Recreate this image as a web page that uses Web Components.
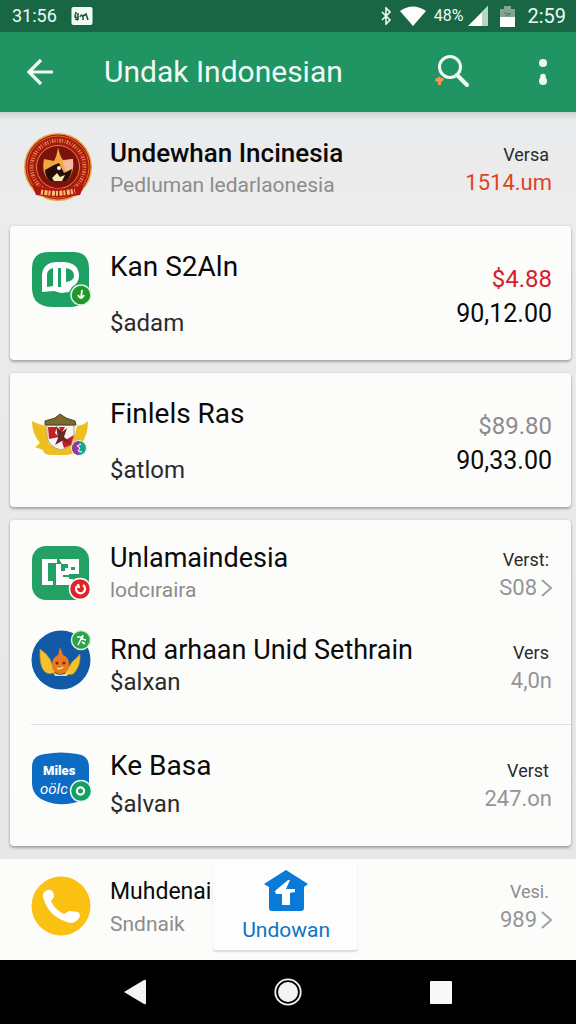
<!DOCTYPE html>
<html lang="id">
<head>
<meta charset="utf-8">
<meta name="viewport" content="width=device-width, initial-scale=1">
<title>Undak Indonesian</title>
<style>
  body { margin: 0; font-family: Roboto, "Liberation Sans", sans-serif; color: #0a0a0a; background: #e9eaeb; }
</style>
</head>
<body>
<phone-screen>
  <status-bar slot="top"></status-bar>
  <app-bar slot="top">Undak Indonesian</app-bar>

  <list-row class="head" variant="hero">
    <app-icon slot="icon" name="seal"></app-icon>
    <span slot="title">Undewhan Incinesia</span>
    <span slot="sub">Pedluman ledarlaonesia</span>
    <span slot="meta">Versa</span>
    <span slot="value">1514.um</span>
  </list-row>

  <list-card>
    <list-row variant="price">
      <app-icon slot="icon" name="chat"></app-icon>
      <span slot="title">Kan S2Aln</span>
      <span slot="sub">$adam</span>
      <span slot="meta">$4.88</span>
      <span slot="value">90,12.00</span>
    </list-row>
  </list-card>

  <list-card>
    <list-row variant="price" muted>
      <app-icon slot="icon" name="crest"></app-icon>
      <span slot="title">Finlels Ras</span>
      <span slot="sub">$atlom</span>
      <span slot="meta">$89.80</span>
      <span slot="value">90,33.00</span>
    </list-row>
  </list-card>

  <list-card>
    <list-row variant="first" chevron>
      <app-icon slot="icon" name="maze"></app-icon>
      <span slot="title">Unlamaindesia</span>
      <span slot="sub">lodcıraira</span>
      <span slot="meta">Verst:</span>
      <span slot="value">S08</span>
    </list-row>
    <list-row variant="second">
      <app-icon slot="icon" name="garuda"></app-icon>
      <span slot="title">Rnd arhaan Unid Sethrain</span>
      <span slot="sub">$alxan</span>
      <span slot="meta">Vers</span>
      <span slot="value">4,0n</span>
    </list-row>
    <list-row variant="third">
      <app-icon slot="icon" name="badge"></app-icon>
      <span slot="title">Ke Basa</span>
      <span slot="sub">$alvan</span>
      <span slot="meta">Verst</span>
      <span slot="value">247.on</span>
    </list-row>
  </list-card>

  <list-row class="tail" variant="tail" chevron>
    <app-icon slot="icon" name="phone"></app-icon>
    <span slot="title">Muhdenai</span>
    <span slot="sub">Sndnaik</span>
    <span slot="meta">Vesi.</span>
    <span slot="value">989</span>
  </list-row>

  <home-button slot="float">Undowan</home-button>
  <nav-bar slot="bottom"></nav-bar>
</phone-screen>

<script>
const define = (name, html) => {
  const t = document.createElement('template');
  t.innerHTML = html;
  customElements.define(name, class extends HTMLElement {
    constructor() {
      super();
      this.attachShadow({ mode: 'open' }).append(t.content.cloneNode(true));
    }
  });
};

define('phone-screen', `
<style>
  :host { display: flex; flex-direction: column; min-height: 100vh; }
  main { flex: 1; display: flex; flex-direction: column; position: relative;
    background: linear-gradient(#cfd4d3 0, #eaebec 8px, #ececed 100px, #e6e6e6 100%); }
  ::slotted(list-card) { margin: 0 5px 13px 10px; }
  ::slotted(.tail) { flex: 1; background: #fcfcfb; }
</style>
<slot name="top"></slot>
<main><slot></slot><slot name="float"></slot></main>
<slot name="bottom"></slot>`);

define('status-bar', `
<style>
  :host { display: flex; align-items: center; height: 32px; padding: 0 10px 0 12px; background: #196644; color: #effaf4; font-size: 18px; line-height: 24px; }
  svg { display: block; flex: none; }
  .note { margin-left: 14px; }
  .right { margin-left: auto; display: flex; align-items: center; gap: 8px; }
  .pct { font-size: 16px; margin-right: -3px; }
  .battery { margin-left: 4px; }
  .clock { margin-left: 4px; font-size: 20px; }
</style>
<span>31:56</span>
<svg class="note" width="22" height="18" viewBox="0 0 22 18"><rect x="0.500" width="21" height="18" rx="2" fill="#f4fbf7"/><path d="M5 5l-1 5 3 1M7 6v7M9 10q2-4 3 0v3M12 9l3-2 2 6M4 12l3 1" fill="none" stroke="#1b5a3f" stroke-width="1.600"/></svg>
<div class="right">
  <svg width="12" height="18" viewBox="0 0 12 18"><path d="M2 5l8 8-4 4V1l4 4-8 8" fill="none" stroke="#effaf4" stroke-width="1.600"/></svg>
  <svg width="26" height="20" viewBox="0 0 26 20"><path d="M0 5Q13-4 26 5L13 20Z" fill="#fff"/></svg>
  <span class="pct">48%</span>
  <svg width="20" height="20" viewBox="0 0 20 20"><path d="M20 0V20H0Z" fill="#fff"/><path d="M14 6L20 0V20H14Z" fill="#b9d3c6"/></svg>
  <svg class="battery" width="15" height="21" viewBox="0 0 15 21"><path d="M4 0h7v3h4v9H0V3h4Z" fill="#7fa692"/><path d="M4 7l7 1-6 2" stroke="#4b7d64" fill="none"/><path d="M0 11h15v10H0Z" fill="#fff"/></svg>
  <span class="clock">2:59</span>
</div>`);

define('app-bar', `
<style>
  :host { display: flex; align-items: center; height: 80px; padding: 0 13px 0 20px; background: #219464; color: #f1fbf6; }
  h1 { margin: 0 auto 0 44px; font-size: 30px; font-weight: 400; line-height: 40px; }
  button { border: 0; padding: 0; background: none; color: inherit; width: 40px; height: 48px; display: grid; place-items: center; }
  .more { margin-left: 50px; }
  svg { display: block; overflow: visible; }
</style>
<button aria-label="Back"><svg width="28" height="28" viewBox="0 0 28 28"><path d="M15 2L3 14L15 26M3 14H27" fill="none" stroke="currentColor" stroke-width="3.200"/></svg></button>
<h1><slot></slot></h1>
<button aria-label="Search"><svg width="36" height="36" viewBox="0 0 36 36"><circle cx="15" cy="13" r="10.500" fill="none" stroke="currentColor" stroke-width="3"/><path d="M22 21L32 31" stroke="currentColor" stroke-width="4" stroke-linecap="round"/><path d="M1 24L3 24L4 22L6 24L9 24L8 27L6 28L6 31L3 31L3 28L0 27Z" fill="#e79a51"/></svg></button>
<button class="more" aria-label="More"><svg width="10" height="28" viewBox="0 0 10 28"><g fill="currentColor"><circle cx="5" cy="5" r="4"/><circle cx="5" cy="18.500" r="2.800"/><circle cx="5" cy="23" r="4"/></g></svg></button>`);

define('list-card', `
<style>
  :host { display: block; background: #fcfcfb; border-radius: 4px; box-shadow: 0 2px 3px rgba(0,0,0,.28), 0 0 3px rgba(0,0,0,.1); }
</style><slot></slot>`);

define('list-row', `
<style>
  :host { --h: 114px; --gap: 0px; --indent: 21px; --end: 19px;
    display: flex; align-items: center; box-sizing: border-box; min-height: var(--h); padding: 0 var(--end) 0 var(--indent); }
  :host([variant=hero]) { --indent: 24px; --end: 24px; padding-bottom: 4px; }
  :host([variant=price]) { --h: 134px; --gap: 24px; }
  :host([variant=first]) { --h: 104px; }
  :host([variant=second]) { --h: 100px; padding-bottom: 20px; }
  :host([variant=third]) { --h: 122px; --gap: 6px; position: relative; padding-bottom: 4px; }
  :host([variant=tail]) { --h: 101px; --indent: 31px; --end: 24px; padding-bottom: 8px; }
  .icon { width: 60px; flex: none; margin-right: 19px; }
  :host([variant=hero]) .icon { width: 68px; margin-right: 18px; }
  :host([variant=price]) .icon { padding-bottom: 26px; }
  :host([muted]) .icon { padding-bottom: 12px; }
  :host([variant=first]) .icon { padding-top: 4px; }
  :host([variant=second]) .icon, :host([variant=third]) .icon { padding-bottom: 8px; }
  .text { flex: 1; display: flex; flex-direction: column; gap: var(--gap); min-width: 0; white-space: nowrap; }
  .title { font-size: 28px; line-height: 36px; }
  .sub { font-size: 24px; line-height: 28px; color: #2b2b2b; }
  :host([variant=hero]) .title { font-weight: 500; font-size: 26px; }
  :host([variant=first]) .title, :host([variant=second]) .title { font-size: 27px; }
  :host([variant=hero]) .sub, :host([variant=first]) .sub, :host([variant=tail]) .sub { color: #8c8c8e; font-size: 21px; }
  :host([variant=tail]) .title { font-size: 23px; }
  .side { display: flex; flex-direction: column; align-items: flex-end; white-space: nowrap; line-height: 28px; padding-top: 4px; }
  .meta { font-size: 18px; color: #2b2b2b; margin-right: 3px; }
  .value { font-size: 22px; color: #959597; display: flex; align-items: center; gap: 3px; }
  :host([variant=hero]) .value { color: #e0431f; }
  :host([variant=price]) .side { gap: 7px; padding-top: 6px; }
  :host([variant=price]) .meta { font-size: 24px; color: #d2202c; margin: 0; }
  :host([variant=price]) .value { font-size: 25px; color: #0a0a0a; }
  :host([variant=price][muted]) .meta { color: #8c8c8e; }
  :host([variant=second]) .side { padding-top: 6px; }
  :host([variant=tail]) .side { padding: 0; }
  :host([variant=tail]) .meta { color: #8c8c8e; }
  svg { display: none; }
  :host([chevron]) svg { display: block; }
  hr { display: none; border: 0; margin: 0; height: 1px; background: #e0e0e0; position: absolute; top: 0; left: 21px; right: 0; }
  :host([variant=third]) hr { display: block; }
</style>
<hr>
<div class="icon"><slot name="icon"></slot></div>
<div class="text"><div class="title"><slot name="title"></slot></div><div class="sub"><slot name="sub"></slot></div></div>
<div class="side"><div class="meta"><slot name="meta"></slot></div>
<div class="value"><slot name="value"></slot><svg width="12" height="20" viewBox="0 0 12 20"><path d="M2 2L11 10L2 18" fill="none" stroke="#a0a0a2" stroke-width="2"/></svg></div></div>`);

const icons = {
  seal: [68, 70, `<circle cx="34" cy="35" r="34" fill="#e9a23c"/><circle cx="34" cy="35" r="32.500" fill="#a9180f"/><circle cx="34" cy="35" r="31" fill="none" stroke="#d86a2c"/>
    <circle cx="34" cy="35" r="26.500" fill="none" stroke="#e8a351" stroke-width="4" stroke-dasharray="1 1.500 .6 1.200 1.400 1" pathLength="150" transform="rotate(150 34 35)" opacity=".8"/>
    <circle cx="34" cy="35" r="21.500" fill="#7d120d" stroke="#d9893a"/>
    <path d="M34 15Q36 25 39 28L49 27Q51 42 42 49H26Q17 42 20 27L30 29Q33 24 34 15Z" fill="#f0a93c"/><path d="M38 29l11-2q1 12-5 17Z" fill="#f6b9a0"/><path d="M21 38L30 33L35 31L40 41L48 37Q47 45 42 49H26Q21 45 21 38Z" fill="#2b0d08"/><path d="M28 46l5-5 3 4 5-2-3 6h-8Z" fill="#f6e7b4"/><circle cx="35" cy="36" r="2" fill="#fff"/>
    <path d="M8 53Q34 60 60 53L56 63Q34 67 12 63Z" fill="#b5150f"/><path d="M17 60Q34 63 51 59" fill="none" stroke="#f2c178" stroke-width="5" stroke-dasharray="2 1.500 3 1"/>`],
  chat: [60, 60, `<path d="M18 2H42Q58 2 58 18V38Q58 57 38 57H22Q1 57 1 38V18Q1 2 18 2Z" fill="#1fa063"/><path d="M11 42V25Q12 12 27 12H33Q48 13 48 26Q48 33 41 37L38 42L30 43L23 41Z" fill="#fff"/><path d="M16 37V24Q17 19 22 18V36ZM27 18H30V37H27ZM35 18Q43 19 43 26Q43 31 35 32Z" fill="#1fa063"/><circle cx="50" cy="45" r="10" fill="#20962d" stroke="#d7f5da" stroke-width="1.500"/><path d="M51 40l-1 8M47 45q3 6 6 0" fill="none" stroke="#fff" stroke-width="1.800"/>`],
  crest: [60, 60, `<path d="M1 17Q9 21 15 22L18 40Q30 46 42 38L46 22Q53 21 57 17Q57 32 50 40Q46 50 36 51H22Q12 51 12 46L4 43L9 39Q1 30 1 17Z" fill="#edc01f"/><path d="M16 21H43V33Q41 43 30 46Q18 43 16 33Z" fill="#fbf5f2" stroke="#b9a17a"/><path d="M17 23H26L24 29L28 33L18 35ZM28 23H34L30 30ZM31 38L43 31L40 41L33 44Z" fill="#c31f27"/><path d="M25 22l6 6 5-4-3 9 7 6-9-2-7 4 3-7Z" fill="#6a2628"/><path d="M14 17L24 14L29 10L35 14L44 17L45 21H14Z" fill="#7c6a2e" stroke="#4e431e"/><circle cx="48" cy="44" r="7.500" fill="#1aa68f" stroke="#e8f3f0"/><path d="M48 37A7 7 0 0 0 48 51Z" fill="#8d3aa4"/><path d="M50 40l-4 2 3 2-2 3 4 1" fill="none" stroke="#fff"/>`],
  maze: [60, 60, `<rect x="1" y="2" width="57" height="54" rx="14" fill="#23a063"/><path d="M11 15H26V19H17V37H22V41H11ZM28 15H48V30H38V35H42V41H25V20H31Z" fill="#fff"/><path d="M30 20H37V24H34V27H30ZM32 31H44V33H32Z" fill="#23a063"/><rect x="40" y="23" width="4" height="3" fill="#23a063"/><circle cx="49" cy="45" r="10.500" fill="#dd242c" stroke="#fff" stroke-width="1.500"/><path d="M46 42a4.500 4.500 0 1 0 6-1M48 44l-1-4" fill="none" stroke="#fff" stroke-width="2.200"/>`],
  garuda: [60, 60, `<circle cx="30" cy="30" r="29.500" fill="#1259a8"/><path d="M9 19Q15 23 19 29L24 42Q18 46 13 41Q8 35 9 19ZM49 24Q46 28 41 32L34 43Q41 47 44 42Q50 35 49 24Z" fill="#f4c22c" stroke="#b98922" stroke-width=".700"/><path d="M29 17L32 25Q39 28 38 36Q36 44 29 44Q21 43 21 35Q21 28 27 25Z" fill="#ea7a22"/><path d="M22 42Q29 48 39 41L36 46H24Z" fill="#f7dd6c"/><circle cx="26" cy="33" r="1.500" fill="#6b2c12"/><circle cx="33" cy="33" r="1.500" fill="#6b2c12"/><path d="M26 38q3 2 6-1" stroke="#fbe29a" fill="none" stroke-width="1.500"/><circle cx="50" cy="10" r="9.500" fill="#2ba24c" stroke="#d9f2cf" stroke-width="1.500"/><path d="M46 7h5l-4 8M52 5l-1 4 4 1M51 12l3 2" fill="none" stroke="#fff" stroke-width="1.600"/>`],
  badge: [60, 56, `<path d="M14 3Q30 0 46 3Q58 4 58 16V34Q57 50 42 52Q28 55 17 51Q1 46 1 32V16Q1 4 14 3Z" fill="#0c6cc4"/><text x="12" y="24" font-size="13" font-weight="900" fill="#fff">Miles</text><text x="9" y="43" font-size="15" font-style="italic" fill="#fff">oölc</text><circle cx="50" cy="40" r="10.500" fill="#149f63" stroke="#e6f5ee" stroke-width="1.500"/><circle cx="49.500" cy="40" r="3.600" fill="none" stroke="#fff" stroke-width="2.200"/>`],
  phone: [60, 60, `<circle cx="30" cy="30" r="29.500" fill="#fbc112"/><path d="M12 18Q15 13 20 14Q23 16 23 21L20 25Q24 34 33 38L38 35L47 36Q50 38 48 42Q45 47 39 47Q17 41 12 21Z" fill="#fff"/>`]
};

customElements.define('app-icon', class extends HTMLElement {
  constructor() {
    super();
    this.attachShadow({ mode: 'open' });
  }
  connectedCallback() {
    const [w, h, art] = icons[this.getAttribute('name')];
    this.shadowRoot.innerHTML = `<style>:host { display: block; } svg { display: block; overflow: visible; }</style>
      <svg width="${w}" height="${h}" viewBox="0 0 ${w} ${h}" aria-hidden="true">${art}</svg>`;
  }
});

define('home-button', `
<style>
  :host { display: block; position: absolute; bottom: 10px; left: 37%; width: 25%; }
  button { width: 100%; height: 86px; border: 0; padding: 0 0 4px 2px; border-radius: 3px; background: #fdfdfd; box-shadow: 0 2px 2px rgba(0,0,0,.14);
    display: flex; flex-direction: column; align-items: center; justify-content: flex-end; gap: 2px; font: 21px/32px Roboto, "Liberation Sans", sans-serif; color: #0b74c0; }
  svg { display: block; }
</style>
<button><svg width="44" height="42" viewBox="0 0 44 42"><path d="M22 0L44 14L40 17V38Q40 41 37 41H8Q5 41 5 38V17L0 14Z" fill="#0a7ad8"/><path d="M24 10L11 21L12 24H18V35H26V23L31 22V19H22L26 10Z" fill="#fff"/></svg><span><slot></slot></span></button>`);

define('nav-bar', `
<style>
  :host { display: flex; align-items: center; justify-content: center; gap: 105px; height: 64px; background: #000; }
  button { border: 0; padding: 0; background: none; width: 48px; height: 48px; display: grid; place-items: center; }
  svg { display: block; }
</style>
<button aria-label="Back"><svg width="24" height="28" viewBox="0 0 24 28"><path d="M1 14L21 2Q23 1 23 3V25Q23 27 21 26Z" fill="#f4f4f4"/></svg></button>
<button aria-label="Home"><svg width="28" height="28" viewBox="0 0 28 28"><circle cx="14" cy="14" r="12.700" fill="none" stroke="#f4f4f4" stroke-width="1.800"/><circle cx="14" cy="14" r="10" fill="#f4f4f4"/></svg></button>
<button aria-label="Recent"><svg width="22" height="23" viewBox="0 0 22 23"><rect width="22" height="23" rx="1" fill="#f8f8f8"/></svg></button>`);
</script>
</body>
</html>
